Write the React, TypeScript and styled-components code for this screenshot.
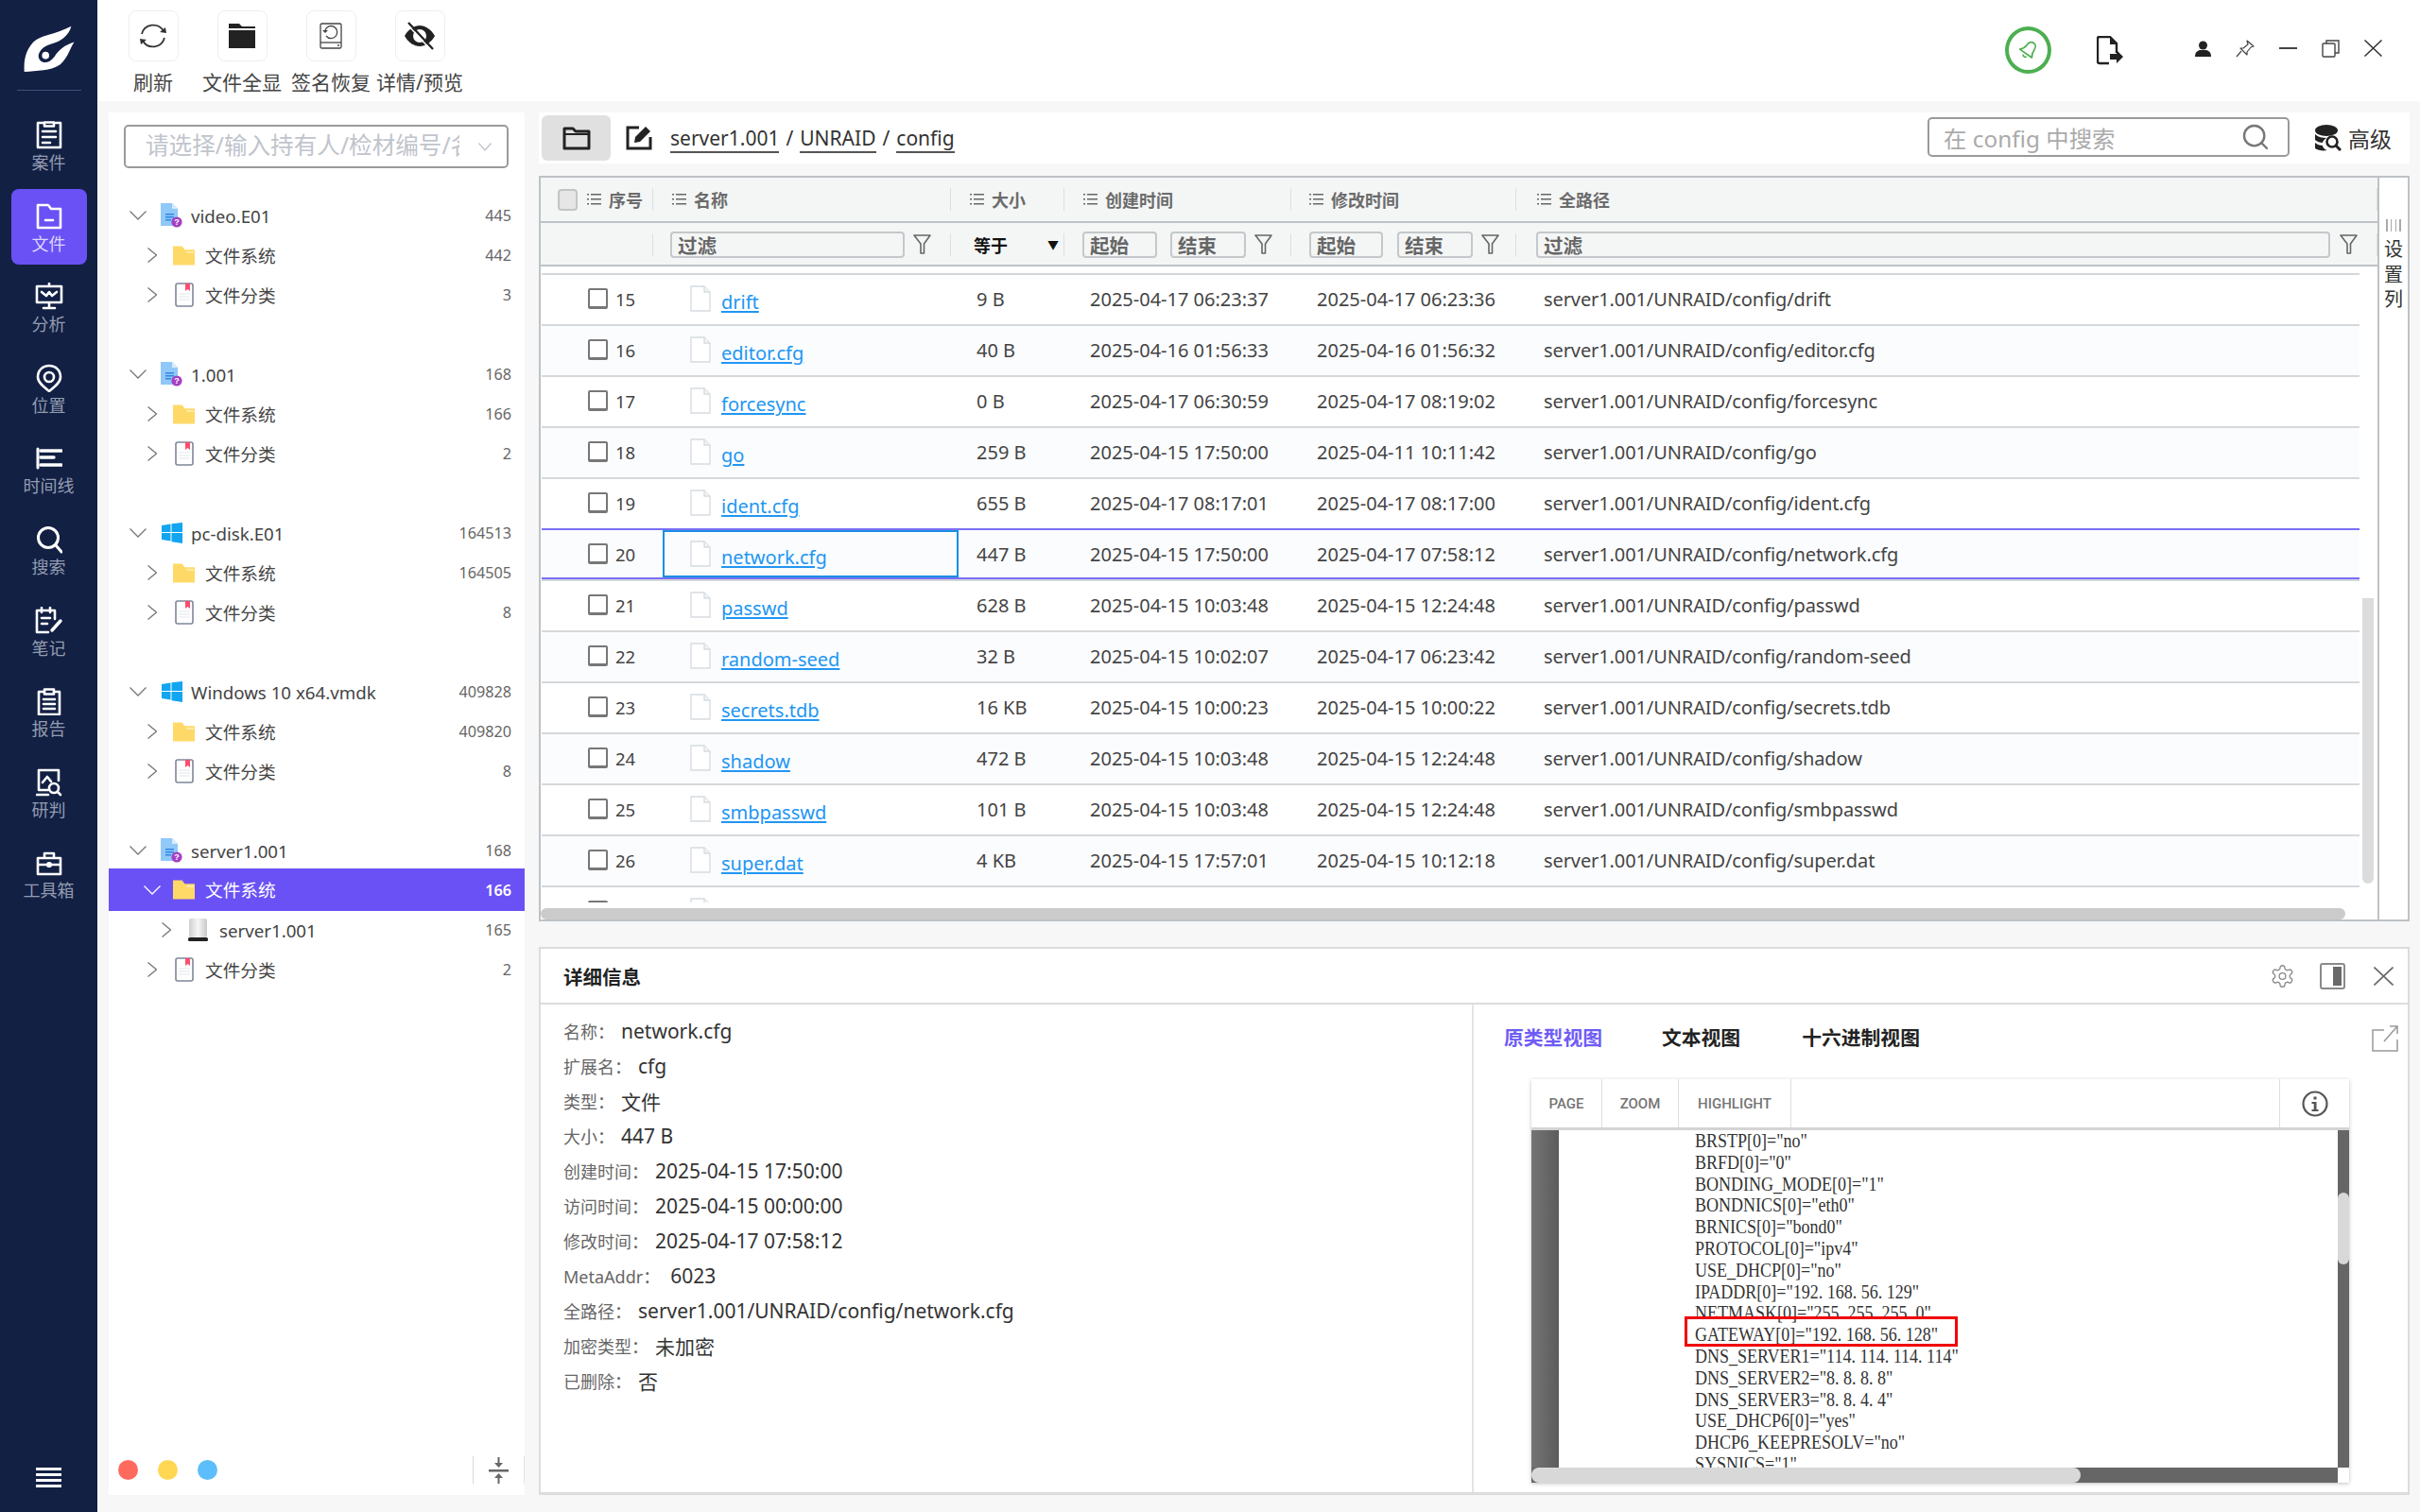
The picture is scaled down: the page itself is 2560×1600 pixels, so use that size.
import React from 'react';
import styled, { createGlobalStyle } from 'styled-components';
import { Search } from 'lucide-react';

const GlobalStyle = createGlobalStyle`
    html, body {
        margin: 0;
        padding: 0;
        background: #f7f7f7;
    }
    * {
        box-sizing: border-box;
    }
    body {
        font-family: "Noto Sans", "Noto Sans CJK SC", sans-serif;
        color: #333;
    }
`;

const Page = styled.div`
    width: 2560px;
    height: 1600px;
    display: flex;
    overflow: hidden;
    background: #f7f7f7;
`;

/* ---------- sidebar ---------- */
const Sidebar = styled.aside`
    width: 103px;
    height: 100%;
    background: #122044;
    display: flex;
    flex-direction: column;
    align-items: center;
`;

const LogoBox = styled.div`
    width: 68px;
    height: 96px;
    padding-top: 27px;
    margin-bottom: 18px;
    border-bottom: 1px solid #3f4d78;
    display: flex;
    justify-content: center;
`;

const NavList = styled.nav`
    display: flex;
    flex-direction: column;
    gap: 5.6px;
`;

const NavItem = styled.div<{ $active?: boolean }>`
    width: 80px;
    height: 80px;
    padding-top: 15px;
    border-radius: 8px;
    display: flex;
    flex-direction: column;
    align-items: center;
    background: ${(p) => (p.$active ? '#6a51f5' : 'transparent')};
    color: #fff;
`;

const NavIcon = styled.div`
    height: 28px;
    display: flex;
    align-items: center;
    justify-content: center;
`;

const NavLabel = styled.div<{ $active?: boolean }>`
    height: 30px;
    line-height: 30px;
    font-size: 18px;
    color: ${(p) => (p.$active ? '#d9d5fb' : '#939cb0')};
`;

const MenuLines = styled.div`
    margin-top: auto;
    margin-bottom: 26px;
    width: 27px;
    height: 21px;
    display: flex;
    flex-direction: column;
    justify-content: space-between;
    span {
        display: block;
        height: 3px;
        background: #fff;
    }
`;

/* ---------- top toolbar ---------- */
const Main = styled.div`
    flex: 1;
    display: flex;
    flex-direction: column;
    min-width: 0;
`;

const Toolbar = styled.header`
    height: 107px;
    flex: none;
    background: #fff;
    padding: 11px 40px 0 12px;
    display: flex;
    align-items: flex-start;
`;

const ToolItem = styled.div`
    width: 94px;
    display: flex;
    flex-direction: column;
    align-items: center;
`;

const ToolButton = styled.div`
    width: 53px;
    height: 54px;
    border: 1.5px solid #eeeeee;
    border-radius: 8px;
    display: flex;
    align-items: center;
    justify-content: center;
`;

const ToolLabel = styled.div`
    margin-top: 8px;
    height: 30px;
    line-height: 28px;
    font-size: 21px;
    color: #444;
    white-space: nowrap;
`;

const TopRight = styled.div`
    margin-left: auto;
    display: flex;
    align-items: center;
    height: 84px;
`;

const BellRing = styled.div`
    width: 49px;
    height: 50px;
    border: 4px solid #4caf50;
    border-radius: 50%;
    display: flex;
    align-items: center;
    justify-content: center;
`;

const ExportBox = styled.div`
    margin-left: 48px;
    margin-right: 76px;
    display: flex;
`;

const WindowButtons = styled.div`
    display: flex;
    align-items: center;
    gap: 26px;
    margin-top: -4px;
`;

const Content = styled.div`
    flex: 1;
    display: flex;
    gap: 15px;
    padding: 12px 11px 18px 12px;
    min-height: 0;
`;

/* ---------- left tree ---------- */
const TreePanel = styled.section`
    width: 440px;
    flex: none;
    background: #fff;
    display: flex;
    flex-direction: column;
    padding-top: 13px;
`;

const EvidenceSelect = styled.div`
    margin: 0 17px 29px 16px;
    height: 46px;
    border: 2px solid #9a9a9a;
    border-radius: 5px;
    display: flex;
    align-items: center;
    padding: 0 16px 0 21px;
    gap: 20px;
    span {
        flex: 1;
        height: 40px;
        line-height: 38px;
        overflow: hidden;
        white-space: nowrap;
        font-size: 24.6px;
        color: #c0c4cc;
    }
`;

const TreeGroup = styled.div`
    margin-bottom: 42px;
`;

const TreeRow = styled.div<{ $level: number; $selected?: boolean }>`
    display: flex;
    align-items: center;
    height: ${(p) => (p.$selected ? 45 : 42)}px;
    margin: ${(p) => (p.$selected ? '-2px 0 -1px' : '0')};
    padding-left: ${(p) => 22 + p.$level * 15}px;
    padding-right: 14px;
    background: ${(p) => (p.$selected ? '#6a51f5' : 'transparent')};
    color: ${(p) => (p.$selected ? '#fff' : '#444')};
`;

const TreeArrow = styled.div`
    width: 18px;
    display: flex;
    justify-content: center;
    flex: none;
`;

const TreeIcon = styled.div<{ $level: number }>`
    width: 23px;
    height: 28px;
    flex: none;
    margin-left: ${(p) => (p.$level === 0 ? 15 : 13)}px;
    margin-right: ${(p) => (p.$level === 0 ? 9 : 11)}px;
    display: flex;
    align-items: center;
    justify-content: center;
`;

const TreeName = styled.div<{ $level: number }>`
    font-size: 18.7px;
    white-space: nowrap;
    flex: 1;
    margin-top: ${(p) => (p.$level === 1 ? -2 : 0)}px;
`;

const TreeCount = styled.div<{ $selected?: boolean }>`
    font-size: 16.2px;
    color: ${(p) => (p.$selected ? '#fff' : '#666')};
    font-weight: ${(p) => (p.$selected ? 600 : 400)};
`;

const TreeFooter = styled.footer`
    margin-top: auto;
    height: 41px;
    display: flex;
    align-items: flex-start;
    padding-left: 10px;
    gap: 21px;
`;

const Dot = styled.div<{ $color: string }>`
    width: 21px;
    height: 21px;
    margin-top: 4px;
    border-radius: 50%;
    background: ${(p) => p.$color};
`;

const CollapseBox = styled.div`
    margin-left: auto;
    width: 55px;
    height: 29px;
    border-left: 1px solid #d8d8d8;
    border-right: 1px solid #e4e4e4;
    display: flex;
    align-items: center;
    justify-content: center;
`;

/* ---------- right column ---------- */
const RightColumn = styled.div`
    flex: 1;
    min-width: 0;
    display: flex;
    flex-direction: column;
`;

const PathBar = styled.div`
    height: 54px;
    margin-bottom: 13px;
    background: #fff;
    display: flex;
    align-items: center;
    padding-left: 3px;
    padding-right: 19px;
`;

const FolderButton = styled.div`
    width: 73px;
    height: 48px;
    background: #e0e0e0;
    border-radius: 6px;
    display: flex;
    align-items: center;
    justify-content: center;
`;

const EditBox = styled.div`
    margin-left: 16px;
    margin-right: 19px;
    display: flex;
`;

const Crumbs = styled.div`
    display: flex;
    gap: 7px;
    margin-top: 1px;
    font-size: 21px;
    color: #333;
`;

const Crumb = styled.span`
    border-bottom: 2px solid #555;
    line-height: 28px;
`;

const SearchBox = styled.div`
    margin-left: auto;
    width: 383px;
    height: 42px;
    margin-top: -2px;
    border: 2px solid #9a9a9a;
    border-radius: 5px;
    display: flex;
    align-items: center;
    justify-content: space-between;
    padding: 0 18px 0 15px;
    font-size: 24.4px;
    color: #aaaaaa;
`;

const AdvancedBox = styled.div`
    margin-left: 27px;
    display: flex;
    align-items: center;
    gap: 7px;
    font-size: 23px;
    color: #333;
`;

/* ---------- table ---------- */
const TableFrame = styled.div`
    height: 789px;
    flex: none;
    border: 2px solid #bdc2c6;
    display: flex;
    background: #fff;
`;

const TableMain = styled.div`
    flex: 1;
    min-width: 0;
    display: flex;
    flex-direction: column;
`;

const HeadRow = styled.div<{ $height: number }>`
    display: grid;
    grid-template-columns: 119px 315px 120px 240px 238px 1fr;
    align-items: center;
    height: ${(p) => p.$height}px;
    flex: none;
    background: #f4f6f6;
    border-bottom: 2px solid #bdc2c6;
`;

const HeadCell = styled.div<{ $left: number }>`
    height: 24px;
    display: flex;
    align-items: center;
    padding-left: ${(p) => p.$left}px;
    border-right: 1px solid #dcdfe1;
    font-size: 18px;
    font-weight: 700;
    color: #6b6b6b;
`;

const HeadCheck = styled.div`
    width: 21px;
    height: 23px;
    margin-right: 10px;
    background: #e6e6e6;
    border: 2px solid #c4c4c4;
    border-radius: 4px;
`;

const ListMark = styled.div`
    margin-right: 8px;
    display: flex;
`;

const FilterCell = styled.div<{ $left?: number }>`
    height: 24px;
    margin-top: 1px;
    display: flex;
    align-items: center;
    padding-left: ${(p) => p.$left || 0}px;
    border-right: 1px solid #dcdfe1;
`;

const FilterInput = styled.div<{ $width?: number; $gap?: number }>`
    flex: ${(p) => (p.$width ? 'none' : '1')};
    width: ${(p) => (p.$width ? `${p.$width}px` : 'auto')};
    height: 28px;
    margin-right: ${(p) => p.$gap ?? 9}px;
    padding-left: 6px;
    border: 2px solid #c4c8cb;
    border-radius: 4px;
    line-height: 26px;
    font-size: 20.6px;
    font-weight: 700;
    color: #666;
    overflow: hidden;
    white-space: nowrap;
`;

const FunnelBox = styled.div`
    flex: none;
    display: flex;
    margin-right: 20px;
`;

const EqualSelect = styled.div`
    flex: 1;
    display: flex;
    justify-content: space-between;
    align-items: center;
    padding-right: 5px;
    font-size: 18px;
    font-weight: 700;
    color: #111;
    i {
        font-style: normal;
        font-size: 12px;
    }
`;

const TableBody = styled.div`
    position: relative;
    height: 679px;
    flex: none;
    background: #fff;
`;

const RowsClip = styled.div`
    height: 673px;
    padding: 7px 19px 0 1px;
    overflow: hidden;
`;

const RowLine = styled.div`
    height: 2px;
    background: #d5d8db;
`;

const BodyRow = styled.div<{ $even: boolean; $purple?: boolean; $selected?: boolean }>`
    display: grid;
    grid-template-columns: 128px 313px 120px 240px 239px 1fr;
    height: 54px;
    align-items: start;
    font-size: 20px;
    color: #444;
    background: ${(p) => (p.$even ? '#fbfcfe' : '#fff')};
    border-bottom: 2px solid ${(p) => (p.$purple ? '#7a6ff7' : '#d5d8db')};
    box-shadow: ${(p) => (p.$selected ? 'inset 0 -2px 0 #7a6ff7' : 'none')};
`;

const BodyCell = styled.div<{ $path?: boolean }>`
    height: 50px;
    padding-left: ${(p) => (p.$path ? 20 : 19)}px;
    line-height: 52px;
    white-space: nowrap;
    letter-spacing: ${(p) => (p.$path ? '-0.1px' : '0')};
`;

const IndexCell = styled.div`
    height: 50px;
    padding-left: 49px;
    display: flex;
    align-items: center;
    gap: 8px;
    font-size: 18.5px;
`;

const RowCheck = styled.div`
    width: 21px;
    height: 22px;
    border: 2px solid #777;
    border-bottom-width: 3px;
    border-radius: 2px;
    background: #fff;
`;

const NameCell = styled.div<{ $focus?: boolean }>`
    height: 50px;
    padding-left: ${(p) => (p.$focus ? 27 : 29)}px;
    display: flex;
    align-items: center;
    gap: 11px;
    border: ${(p) => (p.$focus ? '2px solid #1a8fe3' : 'none')};
`;

const FileLink = styled.a`
    margin-top: 7px;
    color: #2196f3;
    text-decoration: underline;
    text-underline-offset: 2px;
    font-size: 20px;
`;

const VScroll = styled.div`
    position: absolute;
    right: 4px;
    top: 351px;
    width: 12px;
    height: 302px;
    border-radius: 0 0 6px 6px;
    background: #dcdcdc;
`;

const HScroll = styled.div`
    width: 1909px;
    height: 12px;
    flex: none;
    border-radius: 6px;
    background: #cbcbcb;
`;

const SideStrip = styled.div`
    width: 32px;
    flex: none;
    border-left: 2px solid #bdc2c6;
    padding-top: 44px;
    display: flex;
    flex-direction: column;
    align-items: center;
    font-size: 20px;
    line-height: 26.5px;
    color: #333;
`;

const GripLines = styled.div`
    width: 16px;
    height: 13px;
    margin-bottom: 6px;
    display: flex;
    justify-content: space-between;
    span {
        width: 1.5px;
        background: #aaa;
    }
`;

/* ---------- detail panel ---------- */
const DetailPanel = styled.section`
    margin-top: 27px;
    height: 580px;
    flex: none;
    background: #fff;
    border: 2px solid #dcdcdc;
    border-bottom-width: 3px;
    display: flex;
    flex-direction: column;
`;

const DetailHead = styled.div`
    height: 59px;
    flex: none;
    border-bottom: 2px solid #dcdcdc;
    display: flex;
    align-items: center;
    padding: 0 15px 0 24px;
`;

const DetailTitle = styled.h3`
    margin: 0;
    font-size: 20.5px;
    font-weight: 700;
    color: #222;
`;

const HeadIcons = styled.div`
    margin-left: auto;
    display: flex;
    align-items: center;
    gap: 26px;
`;

const CloseBox = styled.div`
    margin-left: 4px;
    display: flex;
`;

const DetailBody = styled.div`
    flex: 1;
    display: flex;
    min-height: 0;
`;

const InfoColumn = styled.div`
    width: 987px;
    flex: none;
    border-right: 2px solid #e4e4e4;
    padding: 9px 0 0 24px;
`;

const InfoRow = styled.div`
    display: flex;
    align-items: center;
    height: 37.1px;
`;

const InfoLabel = styled.span<{ $wide?: boolean }>`
    font-size: 18px;
    color: #666;
    margin-right: ${(p) => (p.$wide ? 11 : 7)}px;
`;

const InfoValue = styled.span`
    font-size: 21px;
    color: #333;
`;

const PreviewColumn = styled.div`
    flex: 1;
    min-width: 0;
    padding: 0 0 0 32px;
    display: flex;
    flex-direction: column;
`;

const TabRow = styled.div`
    height: 79px;
    flex: none;
    display: flex;
    align-items: center;
    padding: 0 10px 12px 0;
`;

const Tab = styled.div<{ $active?: boolean; $gap: number }>`
    margin-right: ${(p) => p.$gap}px;
    font-size: 20.8px;
    font-weight: 700;
    color: ${(p) => (p.$active ? '#6f5cf6' : '#222')};
`;

const OpenBox = styled.div`
    margin-left: auto;
    margin-top: 4px;
    display: flex;
`;

const Viewer = styled.div`
    width: 865px;
    height: 427px;
    margin-left: 29px;
    flex: none;
    display: flex;
    flex-direction: column;
    box-shadow: 0 1px 4px rgba(0, 0, 0, 0.25);
    background: #fff;
`;

const ViewerBar = styled.div`
    height: 54px;
    flex: none;
    display: flex;
    border-bottom: 3px solid #d4d4d4;
    background: #fff;
`;

const ViewerTool = styled.div<{ $width: number }>`
    width: ${(p) => p.$width}px;
    border-right: 1px solid #dedede;
    display: flex;
    align-items: center;
    justify-content: center;
    font-family: Roboto, sans-serif;
    font-size: 15px;
    font-weight: 500;
    color: #757575;
`;

const InfoTool = styled.div`
    width: 74px;
    margin-left: auto;
    border-left: 1px solid #dedede;
    display: flex;
    align-items: center;
    justify-content: center;
`;

const ViewerStage = styled.div`
    position: relative;
    height: 357px;
    flex: none;
    display: flex;
    background: linear-gradient(to right, #747474, #5c5c5c 29px, #666 29px);
    overflow: hidden;
`;

const PageSheet = styled.div`
    width: 824px;
    margin-left: 29px;
    background: #fff;
    padding-left: 144px;
    font-family: "Liberation Serif", serif;
    font-size: 20px;
    color: #333;
    overflow: hidden;
`;

const PageLine = styled.div`
    height: 22.8px;
    line-height: 22.8px;
    white-space: pre;
    transform: scaleX(0.9);
    transform-origin: left center;
`;

const RedMark = styled.div`
    position: absolute;
    left: 162px;
    top: 197px;
    width: 289px;
    height: 32px;
    border: 3px solid #f00000;
`;

const ViewerThumb = styled.div`
    position: absolute;
    right: 0;
    top: 66px;
    width: 12px;
    height: 76px;
    border-radius: 6px;
    background: #d8d8d8;
`;

const ViewerHBar = styled.div`
    height: 16px;
    flex: none;
    display: flex;
    background: #fff;
`;

const ViewerHTrack = styled.div`
    width: 853px;
    background: #666;
`;

const ViewerHThumb = styled.div`
    width: 581px;
    height: 100%;
    border-radius: 8px;
    background: #d8d8d8;
`;

/* ---------- drawings ---------- */
const Logo = () => (
    <svg width="56" height="50" viewBox="27 20 172 158">
        <path
            fill="#fff"
            d="M30 175C28 140 32 105 60 75 85 50 130 52 187 22 178 55 150 72 125 80 105 86 92 92 82 108 75 120 76 128 84 138 95 148 115 145 130 125 145 100 165 85 197 75 182 95 178 125 150 150 120 172 70 170 30 175Z"
        />
        <circle cx="101" cy="120" r="12" fill="#fff" />
    </svg>
);

const NavSvg = ({ w = 28, h = 30, children }: { w?: number; h?: number; children: React.ReactNode }) => (
    <svg width={w} height={h} viewBox={`0 0 ${w} ${h}`} fill="none" stroke="#fff" strokeWidth="2.6" strokeLinecap="round" strokeLinejoin="round">
        {children}
    </svg>
);

const navIcons: Record<string, React.ReactNode> = {
    案件: (
        <NavSvg>
            <path d="M8 2H2v26h24V2h-6" />
            <path d="M9 1.5h10v4H9zM7 11h14M7 17h14M7 23h8" />
        </NavSvg>
    ),
    文件: (
        <NavSvg h={28}>
            <path d="M2 2h11l3 4h10v20H2z" />
            <path d="M10 18h8" />
        </NavSvg>
    ),
    分析: (
        <NavSvg w={30}>
            <path d="M2 4h26v17H2zM15 1v3M15 21v5M9 27h12" />
            <path d="M7 10l5 4 3-4 3 4 5-4" />
        </NavSvg>
    ),
    位置: (
        <NavSvg>
            <path d="M14 2C7 2 2 7 2 14c0 6 7 11 12 15 5-4 12-9 12-15 0-7-5-12-12-12z" />
            <circle cx="14" cy="14" r="5" />
        </NavSvg>
    ),
    时间线: (
        <NavSvg h={24}>
            <path strokeWidth="3" d="M2 2v20" />
            <path strokeWidth="3.4" d="M5 4h22M5 11h14M5 19h22" />
        </NavSvg>
    ),
    搜索: (
        <NavSvg>
            <circle cx="13" cy="13" r="10.5" strokeWidth="3" />
            <path strokeWidth="3" d="M21 21l6 7" />
        </NavSvg>
    ),
    笔记: (
        <NavSvg w={30}>
            <path d="M21 13V4H2v23h12M7 1v5M16 1v5M7 12h9M7 18h6" />
            <path strokeWidth="3.4" d="M18 25l9-10" />
        </NavSvg>
    ),
    报告: (
        <NavSvg h={30}>
            <path d="M9 5H3v24h22V5h-6" />
            <path d="M9 2.5h10v5H9zM8 13h12M8 18h12M8 23h12" />
        </NavSvg>
    ),
    研判: (
        <NavSvg>
            <path d="M24 13V2H3v21h10M7 15l5-6 4 5M1 28h12" />
            <circle cx="19" cy="21" r="5" />
            <path d="M23 25l3 3" />
        </NavSvg>
    ),
    工具箱: (
        <NavSvg h={27}>
            <path d="M2 8h24v17H2zM9 8V3h10v5M2 15h9M17 15h9" />
            <circle cx="14" cy="15" r="1.8" fill="#fff" />
        </NavSvg>
    ),
};

const navItems = ['案件', '文件', '分析', '位置', '时间线', '搜索', '笔记', '报告', '研判', '工具箱'];

const ArrowDown = ({ color = '#777', w = 18, h = 10 }: { color?: string; w?: number; h?: number }) => (
    <svg width={w} height={h} viewBox={`0 0 ${w} ${h}`} fill="none" stroke={color} strokeWidth="1.3">
        <path d={`M0.5 0.5L${w / 2} ${h - 1}L${w - 0.5} 0.5`} />
    </svg>
);

const ArrowRight = () => (
    <svg width="10" height="16" viewBox="0 0 10 16" fill="none" stroke="#777" strokeWidth="1.3">
        <path d="M0.5 0.5L9.5 8L0.5 15.5" />
    </svg>
);

const CloseX = ({ w, h, color = '#333', weight = 1.5 }: { w: number; h: number; color?: string; weight?: number }) => (
    <svg width={w} height={h} viewBox={`0 0 ${w} ${h}`} fill="none" stroke={color} strokeWidth={weight}>
        <path d={`M0.5 0.5L${w - 0.5} ${h - 0.5}M${w - 0.5} 0.5L0.5 ${h - 0.5}`} />
    </svg>
);

const MinLine = () => (
    <svg width="19" height="3" viewBox="0 0 19 3">
        <path fill="#444" d="M0 0h19v2H0z" />
    </svg>
);

const RefreshIcon = () => (
    <svg width="30" height="30" viewBox="0 0 30 30" fill="none" stroke="#333" strokeWidth="1.8">
        <path d="M3 13A12.5 12.5 0 0 1 26 10" />
        <path d="M27 17A12.5 12.5 0 0 1 4 20" />
        <path fill="#333" stroke="none" d="M29 12l-7-1 6-5zM1 18l7 1-6 5z" />
    </svg>
);

const FolderFill = () => (
    <svg width="28" height="26" viewBox="0 0 28 26" fill="#222">
        <path d="M0 0h11l3 3h14v2H0zM0 7h28v19H0z" />
    </svg>
);

const DiskRestore = () => (
    <svg width="24" height="28" viewBox="0 0 24 28" fill="none" stroke="#444" strokeWidth="1.3">
        <rect x="1" y="1" width="22" height="26" rx="1.5" />
        <path d="M1 21h22" />
        <path d="M6 8a6.5 6.5 0 1 1 1 6" />
        <path fill="#444" stroke="none" d="M3 8h6l-3 3z" />
        <circle cx="20" cy="24" r="1" fill="#444" stroke="none" />
    </svg>
);

const EyeOff = () => (
    <svg width="34" height="30" viewBox="0 0 34 30">
        <path fill="#222" fillRule="evenodd" d="M1 15C5 8 11 4 17 4s12 4 16 11c-4 7-10 11-16 11S5 22 1 15zM17 8a7 7 0 1 0 0 14 7 7 0 0 0 0-14z" />
        <path stroke="#222" strokeWidth="2.4" d="M5 1l26 28" />
        <path stroke="#fff" strokeWidth="1.5" d="M3 2l26 28" />
    </svg>
);

const BellIcon = () => (
    <svg width="23" height="24" viewBox="0 0 26 28" fill="none" stroke="#4caf50" strokeWidth="2" strokeLinejoin="round">
        <g transform="rotate(35 13 14)">
            <path d="M14 3c-4 0-6 3-6 7 0 4-1 6-4 9h18c-2-3-3-5-3-9 0-4-2-7-5-7z" />
            <path d="M11 22c1 2 4 2 5 0" />
        </g>
    </svg>
);

const FileExport = () => (
    <svg width="28" height="31" viewBox="0 0 28 31" fill="none">
        <path stroke="#222" strokeWidth="2.4" d="M21 18V8l-7-7H3a2 2 0 0 0-2 2v24a2 2 0 0 0 2 2h10" />
        <path fill="#222" d="M14 1v8h8zM14 19h7v-4l7 7-7 7v-4h-7z" />
    </svg>
);

const UserIcon = () => (
    <svg width="17" height="17" viewBox="0 0 17 17" fill="#222">
        <circle cx="8.5" cy="5" r="4.5" />
        <path d="M0 17c0-5 3-7 6-7h5c3 0 6 2 6 7z" />
    </svg>
);

const PinIcon = () => (
    <svg width="20" height="19" viewBox="0 0 20 19" fill="none" stroke="#444" strokeWidth="1.2" strokeLinejoin="round">
        <path d="M12 1l7 6-3 1-4 5 0 3-7-7 3 0 5-4z" />
        <path d="M6 12l-5 6" />
    </svg>
);

const RestoreIcon = () => (
    <svg width="19" height="19" viewBox="0 0 19 19" fill="none" stroke="#444" strokeWidth="1.4">
        <rect x="1" y="4" width="13" height="14" rx="1" />
        <path d="M5 4V1h13v13h-4" />
    </svg>
);

const CollapseIcon = () => (
    <svg width="21" height="28" viewBox="0 0 21 28" fill="#666">
        <path d="M0 13h21v2.4H0zM9.5 0h2v6h3.5l-4.5 5-4.5-5h3.5zM9.5 28h2v-6h3.5l-4.5-5-4.5 5h3.5z" />
    </svg>
);

const GroupDoc = () => (
    <svg width="23" height="26" viewBox="0 0 23 26">
        <path fill="#90c8f8" d="M0 0h12l6 6v18H0z" />
        <path fill="#d8ebfc" d="M12 0l6 6h-6z" />
        <path fill="#2f86e0" d="M5 11h9v1.5H5zM5 14h9v1.5H5zM5 17h6v1.5H5z" />
        <circle cx="17" cy="20" r="5.6" fill="#a43fc4" />
        <text x="17" y="23.4" fontSize="9" fontWeight="700" fill="#fff" textAnchor="middle" fontFamily="Liberation Sans, sans-serif">?</text>
    </svg>
);

const WinLogo = () => (
    <svg width="22" height="22" viewBox="0 0 22 22" fill="#12a5f0">
        <path d="M0 3l9.5-1.5V10H0zM10.5 1.3L22 0v10H10.5zM0 11h9.5v8.5L0 18zM10.5 11H22v11l-11.5-1.7z" />
    </svg>
);

const YellowFolder = () => (
    <svg width="24" height="21" viewBox="0 0 24 21">
        <path fill="#ffd968" d="M0 0h10l3 4h11v17H0z" />
        <path fill="#fff2bf" d="M15 6h8v1.5h-8z" />
    </svg>
);

const ClassDoc = () => (
    <svg width="20" height="26" viewBox="0 0 20 26">
        <rect x="1" y="1" width="18" height="24" rx="2" fill="#fff" stroke="#7d8899" strokeWidth="1.6" />
        <path fill="#ff4d6d" d="M11 1h5v8l-2.5-2L11 9z" />
        <path stroke="#e3e6ea" strokeWidth="1" d="M4 12h12M4 15h12M4 18h12" />
    </svg>
);

const DiskIcon = () => (
    <svg width="21" height="24" viewBox="0 0 21 24">
        <defs>
            <linearGradient id="diskFace" x1="0" x2="1" y1="0" y2="0">
                <stop offset="0" stopColor="#cfcfcf" />
                <stop offset="0.5" stopColor="#f6f6f6" />
                <stop offset="1" stopColor="#c8c8c8" />
            </linearGradient>
        </defs>
        <rect x="1" y="0" width="19" height="20" rx="2" fill="url(#diskFace)" />
        <rect x="0" y="20" width="21" height="4" rx="1.5" fill="#222" />
    </svg>
);

const ListIcon = () => (
    <svg width="15" height="12" viewBox="0 0 15 12" fill="#666">
        <path d="M0 0h2v1.6H0zM4 0h11v1.6H4zM0 5h2v1.6H0zM4 5h11v1.6H4zM0 10h2v1.6H0zM4 10h11v1.6H4z" />
    </svg>
);

const Funnel = () => (
    <svg width="19" height="21" viewBox="0 0 19 21" fill="none" stroke="#666" strokeWidth="1.6" strokeLinejoin="round">
        <path d="M1 1h17l-6.5 9v10h-3.5V10z" />
    </svg>
);

const FileSheet = () => (
    <svg width="22" height="28" viewBox="0 0 22 28" fill="#fff" stroke="#d6dbe0" strokeWidth="1.3">
        <path d="M1 1h14l6 6v20H1z" />
        <path d="M15 1v6h6" fill="#f2f4f6" />
    </svg>
);

const OutlineFolder = () => (
    <svg width="30" height="26" viewBox="0 0 30 26" fill="none" stroke="#222" strokeWidth="3" strokeLinejoin="round">
        <path d="M2 24V3h9l3 3h14v18z" />
        <path strokeWidth="2" d="M2 9h26" />
    </svg>
);

const EditIcon = () => (
    <svg width="28" height="26" viewBox="0 0 28 26" fill="none">
        <path stroke="#222" strokeWidth="3" d="M14 2H2v22h24V12" />
        <path fill="#222" d="M9 18l1-6L21 1l5 5-11 11z" />
    </svg>
);

const DbSearch = () => (
    <svg width="28" height="28" viewBox="0 0 28 28">
        <ellipse cx="12" cy="6" rx="12" ry="6" fill="#222" />
        <path fill="#222" d="M0 10c3 3 8 4 12 4-3 2-4 4-4 5-3 0-6-1-8-3zM0 19c2 2 5 3 8 3 0 2 3 5 5 5-5 1-10 0-13-2z" />
        <circle cx="18" cy="18" r="5.5" fill="#fff" stroke="#222" strokeWidth="2.6" />
        <path stroke="#222" strokeWidth="3" d="M22 22l5 5" />
    </svg>
);

const GearIcon = () => (
    <svg width="27" height="28" viewBox="0 0 24 24" fill="none" stroke="#8a8a8a" strokeWidth="1.2" strokeLinecap="round" strokeLinejoin="round">
        <path d="M12.22 2h-.44a2 2 0 0 0-2 2v.18a2 2 0 0 1-1 1.73l-.43.25a2 2 0 0 1-2 0l-.15-.08a2 2 0 0 0-2.73.73l-.22.38a2 2 0 0 0 .73 2.73l.15.1a2 2 0 0 1 1 1.72v.51a2 2 0 0 1-1 1.74l-.15.09a2 2 0 0 0-.73 2.73l.22.38a2 2 0 0 0 2.73.73l.15-.08a2 2 0 0 1 2 0l.43.25a2 2 0 0 1 1 1.73V20a2 2 0 0 0 2 2h.44a2 2 0 0 0 2-2v-.18a2 2 0 0 1 1-1.73l.43-.25a2 2 0 0 1 2 0l.15.08a2 2 0 0 0 2.73-.73l.22-.39a2 2 0 0 0-.73-2.73l-.15-.08a2 2 0 0 1-1-1.74v-.5a2 2 0 0 1 1-1.74l.15-.09a2 2 0 0 0 .73-2.73l-.22-.38a2 2 0 0 0-2.73-.73l-.15.08a2 2 0 0 1-2 0l-.43-.25a2 2 0 0 1-1-1.73V4a2 2 0 0 0-2-2z" />
        <circle cx="12" cy="12" r="3" />
    </svg>
);

const SplitIcon = () => (
    <svg width="27" height="28" viewBox="0 0 27 28">
        <rect x="1" y="1" width="25" height="26" rx="2" fill="#fff" stroke="#8a8a8a" strokeWidth="2" />
        <rect x="14" y="4" width="9" height="20" fill="#6a6a6a" />
    </svg>
);

const OpenIcon = () => (
    <svg width="28" height="28" viewBox="0 0 28 28" fill="none" stroke="#999" strokeWidth="1.5">
        <path d="M13 5H1v22h26V15" />
        <path d="M13 17L27 1M19 1h8v8" />
    </svg>
);

const InfoIcon = () => (
    <svg width="28" height="28" viewBox="0 0 28 28" fill="none">
        <circle cx="14" cy="14" r="12.5" stroke="#555" strokeWidth="2.2" />
        <path fill="#555" d="M12.5 6.5h3v3h-3zM10.5 12h5v8h2v2h-7v-2h2.2v-6h-2.2z" />
    </svg>
);

/* ---------- data ---------- */
type TreeNode = { level: number; name: string; count: string; icon: React.ReactNode; open?: boolean; selected?: boolean };

const fileSystem = (count: string): TreeNode => ({ level: 1, name: '文件系统', count, icon: <YellowFolder /> });
const classify = (count: string): TreeNode => ({ level: 1, name: '文件分类', count, icon: <ClassDoc /> });

const treeGroups: TreeNode[][] = [
    [{ level: 0, name: 'video.E01', count: '445', icon: <GroupDoc />, open: true }, fileSystem('442'), classify('3')],
    [{ level: 0, name: '1.001', count: '168', icon: <GroupDoc />, open: true }, fileSystem('166'), classify('2')],
    [{ level: 0, name: 'pc-disk.E01', count: '164513', icon: <WinLogo />, open: true }, fileSystem('164505'), classify('8')],
    [{ level: 0, name: 'Windows 10 x64.vmdk', count: '409828', icon: <WinLogo />, open: true }, fileSystem('409820'), classify('8')],
    [
        { level: 0, name: 'server1.001', count: '168', icon: <GroupDoc />, open: true },
        { ...fileSystem('166'), open: true, selected: true },
        { level: 2, name: 'server1.001', count: '165', icon: <DiskIcon /> },
        classify('2'),
    ],
];

const files = [
    [15, 'drift', '9 B', '2025-04-17 06:23:37', '2025-04-17 06:23:36'],
    [16, 'editor.cfg', '40 B', '2025-04-16 01:56:33', '2025-04-16 01:56:32'],
    [17, 'forcesync', '0 B', '2025-04-17 06:30:59', '2025-04-17 08:19:02'],
    [18, 'go', '259 B', '2025-04-15 17:50:00', '2025-04-11 10:11:42'],
    [19, 'ident.cfg', '655 B', '2025-04-17 08:17:01', '2025-04-17 08:17:00'],
    [20, 'network.cfg', '447 B', '2025-04-15 17:50:00', '2025-04-17 07:58:12'],
    [21, 'passwd', '628 B', '2025-04-15 10:03:48', '2025-04-15 12:24:48'],
    [22, 'random-seed', '32 B', '2025-04-15 10:02:07', '2025-04-17 06:23:42'],
    [23, 'secrets.tdb', '16 KB', '2025-04-15 10:00:23', '2025-04-15 10:00:22'],
    [24, 'shadow', '472 B', '2025-04-15 10:03:48', '2025-04-15 12:24:48'],
    [25, 'smbpasswd', '101 B', '2025-04-15 10:03:48', '2025-04-15 12:24:48'],
    [26, 'super.dat', '4 KB', '2025-04-15 17:57:01', '2025-04-15 10:12:18'],
] as const;

const infoRows = [
    ['名称：', 'network.cfg'],
    ['扩展名：', 'cfg'],
    ['类型：', '文件'],
    ['大小：', '447 B'],
    ['创建时间：', '2025-04-15 17:50:00'],
    ['访问时间：', '2025-04-15 00:00:00'],
    ['修改时间：', '2025-04-17 07:58:12'],
    ['MetaAddr：', '6023'],
    ['全路径：', 'server1.001/UNRAID/config/network.cfg'],
    ['加密类型：', '未加密'],
    ['已删除：', '否'],
];

const configLines = [
    'BRSTP[0]="no"',
    'BRFD[0]="0"',
    'BONDING_MODE[0]="1"',
    'BONDNICS[0]="eth0"',
    'BRNICS[0]="bond0"',
    'PROTOCOL[0]="ipv4"',
    'USE_DHCP[0]="no"',
    'IPADDR[0]="192. 168. 56. 129"',
    'NETMASK[0]="255. 255. 255. 0"',
    'GATEWAY[0]="192. 168. 56. 128"',
    'DNS_SERVER1="114. 114. 114. 114"',
    'DNS_SERVER2="8. 8. 8. 8"',
    'DNS_SERVER3="8. 8. 4. 4"',
    'USE_DHCP6[0]="yes"',
    'DHCP6_KEEPRESOLV="no"',
    'SYSNICS="1"',
];

const headCols = [
    { title: '名称', left: 20 },
    { title: '大小', left: 20 },
    { title: '创建时间', left: 20 },
    { title: '修改时间', left: 19 },
    { title: '全路径', left: 22 },
];

function App() {
    return (
        <Page>
            <GlobalStyle />
            <Sidebar>
                <LogoBox>
                    <Logo />
                </LogoBox>
                <NavList>
                    {navItems.map((item) => (
                        <NavItem key={item} $active={item === '文件'}>
                            <NavIcon>{navIcons[item]}</NavIcon>
                            <NavLabel $active={item === '文件'}>{item}</NavLabel>
                        </NavItem>
                    ))}
                </NavList>
                <MenuLines>
                    <span />
                    <span />
                    <span />
                    <span />
                </MenuLines>
            </Sidebar>

            <Main>
                <Toolbar>
                    <ToolItem>
                        <ToolButton><RefreshIcon /></ToolButton>
                        <ToolLabel>刷新</ToolLabel>
                    </ToolItem>
                    <ToolItem>
                        <ToolButton><FolderFill /></ToolButton>
                        <ToolLabel>文件全显</ToolLabel>
                    </ToolItem>
                    <ToolItem>
                        <ToolButton><DiskRestore /></ToolButton>
                        <ToolLabel>签名恢复</ToolLabel>
                    </ToolItem>
                    <ToolItem>
                        <ToolButton><EyeOff /></ToolButton>
                        <ToolLabel>详情/预览</ToolLabel>
                    </ToolItem>
                    <TopRight>
                        <BellRing><BellIcon /></BellRing>
                        <ExportBox><FileExport /></ExportBox>
                        <WindowButtons>
                            <UserIcon />
                            <PinIcon />
                            <MinLine />
                            <RestoreIcon />
                            <CloseX w={19} h={18} />
                        </WindowButtons>
                    </TopRight>
                </Toolbar>

                <Content>
                    <TreePanel>
                        <EvidenceSelect>
                            <span>请选择/输入持有人/检材编号/名称</span>
                            <ArrowDown color="#c0c4cc" w={14} h={9} />
                        </EvidenceSelect>
                        {treeGroups.map((group, i) => (
                            <TreeGroup key={i}>
                                {group.map((node, j) => (
                                    <TreeRow key={j} $level={node.level} $selected={node.selected}>
                                        <TreeArrow>
                                            {node.open ? <ArrowDown color={node.selected ? '#fff' : '#777'} /> : <ArrowRight />}
                                        </TreeArrow>
                                        <TreeIcon $level={node.level}>{node.icon}</TreeIcon>
                                        <TreeName $level={node.level}>{node.name}</TreeName>
                                        <TreeCount $selected={node.selected}>{node.count}</TreeCount>
                                    </TreeRow>
                                ))}
                            </TreeGroup>
                        ))}
                        <TreeFooter>
                            <Dot $color="#ff6a5f" />
                            <Dot $color="#ffd752" />
                            <Dot $color="#5cbefc" />
                            <CollapseBox><CollapseIcon /></CollapseBox>
                        </TreeFooter>
                    </TreePanel>

                    <RightColumn>
                        <PathBar>
                            <FolderButton><OutlineFolder /></FolderButton>
                            <EditBox><EditIcon /></EditBox>
                            <Crumbs>
                                <Crumb>server1.001</Crumb>
                                <span>/</span>
                                <Crumb>UNRAID</Crumb>
                                <span>/</span>
                                <Crumb>config</Crumb>
                            </Crumbs>
                            <SearchBox>
                                <span>在 config 中搜索</span>
                                <Search size={32} color="#777" strokeWidth={1.8} />
                            </SearchBox>
                            <AdvancedBox>
                                <DbSearch />
                                <span>高级</span>
                            </AdvancedBox>
                        </PathBar>

                        <TableFrame>
                            <TableMain>
                                <HeadRow $height={48}>
                                    <HeadCell $left={18}>
                                        <HeadCheck />
                                        <ListMark><ListIcon /></ListMark>
                                        序号
                                    </HeadCell>
                                    {headCols.map((col) => (
                                        <HeadCell key={col.title} $left={col.left}>
                                            <ListMark><ListIcon /></ListMark>
                                            {col.title}
                                        </HeadCell>
                                    ))}
                                </HeadRow>
                                <HeadRow $height={46}>
                                    <FilterCell />
                                    <FilterCell $left={18}>
                                        <FilterInput $width={248}>过滤</FilterInput>
                                        <FunnelBox><Funnel /></FunnelBox>
                                    </FilterCell>
                                    <FilterCell $left={24}>
                                        <EqualSelect>等于<i>▼</i></EqualSelect>
                                    </FilterCell>
                                    <FilterCell $left={19}>
                                        <FilterInput $width={79} $gap={14}>起始</FilterInput>
                                        <FilterInput $width={80}>结束</FilterInput>
                                        <FunnelBox><Funnel /></FunnelBox>
                                    </FilterCell>
                                    <FilterCell $left={19}>
                                        <FilterInput $width={78} $gap={15}>起始</FilterInput>
                                        <FilterInput $width={80}>结束</FilterInput>
                                        <FunnelBox><Funnel /></FunnelBox>
                                    </FilterCell>
                                    <FilterCell $left={21}>
                                        <FilterInput $gap={10}>过滤</FilterInput>
                                        <FunnelBox><Funnel /></FunnelBox>
                                    </FilterCell>
                                </HeadRow>
                                <TableBody>
                                    <RowsClip>
                                        <RowLine />
                                        {files.map((f) => (
                                            <BodyRow key={f[0]} $even={f[0] % 2 === 0} $purple={f[0] === 19} $selected={f[0] === 20}>
                                                <IndexCell><RowCheck />{f[0]}</IndexCell>
                                                <NameCell $focus={f[0] === 20}>
                                                    <FileSheet />
                                                    <FileLink>{f[1]}</FileLink>
                                                </NameCell>
                                                <BodyCell>{f[2]}</BodyCell>
                                                <BodyCell>{f[3]}</BodyCell>
                                                <BodyCell>{f[4]}</BodyCell>
                                                <BodyCell $path>server1.001/UNRAID/config/{f[1]}</BodyCell>
                                            </BodyRow>
                                        ))}
                                        <BodyRow $even={false}>
                                            <IndexCell><RowCheck /></IndexCell>
                                            <NameCell><FileSheet /></NameCell>
                                        </BodyRow>
                                    </RowsClip>
                                    <VScroll />
                                </TableBody>
                                <HScroll />
                            </TableMain>
                            <SideStrip>
                                <GripLines><span /><span /><span /><span /></GripLines>
                                <span>设</span>
                                <span>置</span>
                                <span>列</span>
                            </SideStrip>
                        </TableFrame>

                        <DetailPanel>
                            <DetailHead>
                                <DetailTitle>详细信息</DetailTitle>
                                <HeadIcons>
                                    <GearIcon />
                                    <SplitIcon />
                                    <CloseBox><CloseX w={21} h={20} color="#666" weight={1.6} /></CloseBox>
                                </HeadIcons>
                            </DetailHead>
                            <DetailBody>
                                <InfoColumn>
                                    {infoRows.map(([label, value]) => (
                                        <InfoRow key={label}>
                                            <InfoLabel $wide={label.startsWith('Meta')}>{label}</InfoLabel>
                                            <InfoValue>{value}</InfoValue>
                                        </InfoRow>
                                    ))}
                                </InfoColumn>
                                <PreviewColumn>
                                    <TabRow>
                                        <Tab $active $gap={63}>原类型视图</Tab>
                                        <Tab $gap={65}>文本视图</Tab>
                                        <Tab $gap={0}>十六进制视图</Tab>
                                        <OpenBox><OpenIcon /></OpenBox>
                                    </TabRow>
                                    <Viewer>
                                        <ViewerBar>
                                            <ViewerTool $width={75}>PAGE</ViewerTool>
                                            <ViewerTool $width={81}>ZOOM</ViewerTool>
                                            <ViewerTool $width={119}>HIGHLIGHT</ViewerTool>
                                            <InfoTool><InfoIcon /></InfoTool>
                                        </ViewerBar>
                                        <ViewerStage>
                                            <PageSheet>
                                                {configLines.map((line) => (
                                                    <PageLine key={line}>{line}</PageLine>
                                                ))}
                                            </PageSheet>
                                            <RedMark />
                                            <ViewerThumb />
                                        </ViewerStage>
                                        <ViewerHBar>
                                            <ViewerHTrack>
                                                <ViewerHThumb />
                                            </ViewerHTrack>
                                        </ViewerHBar>
                                    </Viewer>
                                </PreviewColumn>
                            </DetailBody>
                        </DetailPanel>
                    </RightColumn>
                </Content>
            </Main>
        </Page>
    );
}

export default App;
